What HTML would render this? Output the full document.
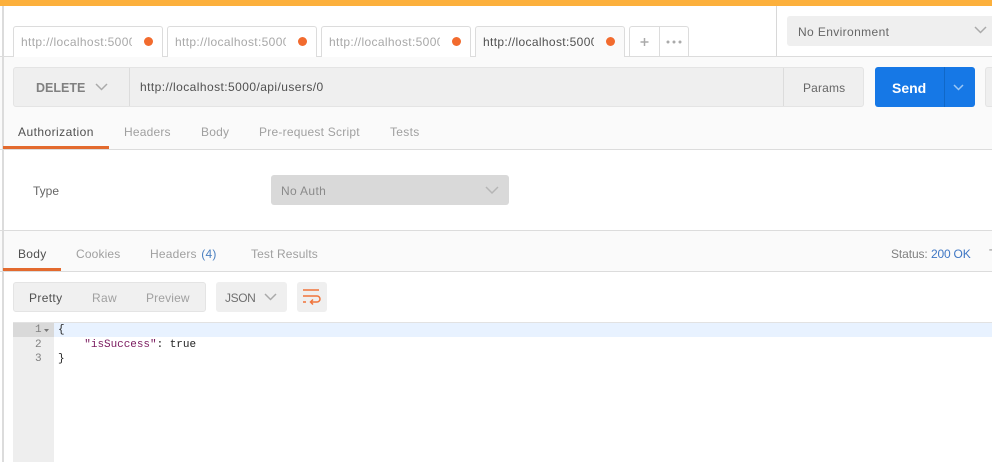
<!DOCTYPE html>
<html><head><meta charset="utf-8"><style>
html,body{margin:0;padding:0;background:#fff}
#p{position:relative;width:992px;height:462px;overflow:hidden;background:#fff;font-family:"Liberation Sans",sans-serif;font-size:12px;color:#808080}
#p div{position:absolute;box-sizing:border-box}
.t{white-space:nowrap;line-height:16px}
.m{white-space:pre;font:11px/16px 'Liberation Mono',monospace;letter-spacing:-.03px;color:#222}
.tab{top:26px;height:31px;width:150px;background:#fff;border:1px solid #dcdcdc;border-bottom:0;border-radius:3px 3px 0 0}
.tab .t{left:7px;top:7px;width:111px;overflow:hidden;color:#a8a8a8;letter-spacing:.35px}
.tab .d{left:130px;top:10px;width:9px;height:9px;border-radius:50%;background:#f26b2e}
svg{position:absolute;overflow:visible}
</style></head><body><div id="p">
<div style="left:0;top:57px;width:992px;height:93px;background:#fafafa"></div>
<div style="left:0;top:231px;width:992px;height:40px;background:#fafafa"></div>
<div style="left:0;top:0;width:992px;height:6px;background:#fcb03c"></div>
<div style="left:2px;top:6px;width:2px;height:456px;background:#dcdcdc"></div>
<div style="left:0;top:56px;width:992px;height:1px;background:#dcdcdc"></div>
<div style="left:776px;top:6px;width:1px;height:50px;background:#d8d8d8"></div>

<div class="tab" style="left:13px"><div class="t">http://localhost:5000</div><div class="d"></div></div>
<div class="tab" style="left:167px"><div class="t">http://localhost:5000</div><div class="d"></div></div>
<div class="tab" style="left:321px"><div class="t">http://localhost:5000</div><div class="d"></div></div>
<div class="tab" style="left:475px;background:#fafafa"><div class="t" style="color:#505050">http://localhost:5000</div><div class="d"></div></div>
<div style="left:629px;top:26px;width:60px;height:30px;background:#fff;border:1px solid #dcdcdc;border-bottom:0;border-radius:3px 3px 0 0"></div>
<div style="left:659px;top:27px;width:1px;height:29px;background:#dcdcdc"></div>
<svg style="left:0;top:0" width="992" height="462">
<path d="M640.500 42h8M644.500 38v8" stroke="#aaa" stroke-width="1.500" fill="none"/>
<circle cx="668" cy="42" r="1.500" fill="#aaa"/><circle cx="674" cy="42" r="1.500" fill="#aaa"/><circle cx="680" cy="42" r="1.500" fill="#aaa"/>
</svg>

<div style="left:787px;top:16px;width:205px;height:30px;background:#efefef;border-radius:3px 0 0 3px"></div>
<div class="t" style="left:798px;top:24px;color:#666;letter-spacing:.38px">No Environment</div>

<div style="left:13px;top:67px;width:851px;height:40px;background:#efefef;border:1px solid #e4e4e4;border-radius:3px"></div>
<div style="left:129px;top:68px;width:1px;height:38px;background:#dcdcdc"></div>
<div style="left:783px;top:68px;width:1px;height:38px;background:#dcdcdc"></div>
<div class="t" style="left:36px;top:80px;font-size:12.500px;font-weight:bold;color:#808080">DELETE</div>
<div class="t" style="left:140px;top:79px;color:#505050;letter-spacing:.43px">http://localhost:5000/api/users/0</div>
<div class="t" style="left:803px;top:80px;color:#666;letter-spacing:.15px">Params</div>

<div style="left:875px;top:67px;width:100px;height:40px;background:#1678e6;border-radius:3px"></div>
<div style="left:944px;top:67px;width:1px;height:40px;background:#1068c8"></div>
<div class="t" style="left:892px;top:80px;font-size:14px;font-weight:bold;color:#fff">Send</div>
<div style="left:985px;top:67px;width:7px;height:40px;background:#efefef;border:1px solid #e4e4e4;border-right:0;border-radius:3px 0 0 3px"></div>

<div class="t" style="left:18px;top:124px;color:#505050;letter-spacing:.45px">Authorization</div>
<div class="t" style="left:124px;top:124px;color:#a0a0a0;letter-spacing:.2px">Headers</div>
<div class="t" style="left:201px;top:124px;color:#a0a0a0;letter-spacing:.2px">Body</div>
<div class="t" style="left:259px;top:124px;color:#a0a0a0;letter-spacing:.23px">Pre-request Script</div>
<div class="t" style="left:390px;top:124px;color:#a0a0a0;letter-spacing:.3px">Tests</div>
<div style="left:0;top:149px;width:992px;height:1px;background:#dcdcdc"></div>
<div style="left:3px;top:146px;width:106px;height:3px;background:#e36a2e"></div>

<div class="t" style="left:33px;top:183px;color:#666">Type</div>
<div style="left:271px;top:175px;width:238px;height:30px;background:#d9d9d9;border-radius:3px"></div>
<div class="t" style="left:281px;top:183px;color:#8a8a8a;letter-spacing:.35px">No Auth</div>

<div style="left:0;top:230px;width:992px;height:1px;background:#dcdcdc"></div>
<div class="t" style="left:18px;top:246px;color:#505050;letter-spacing:.3px">Body</div>
<div class="t" style="left:76px;top:246px;color:#a0a0a0;letter-spacing:.15px">Cookies</div>
<div class="t" style="left:150px;top:246px;color:#a0a0a0;letter-spacing:.2px">Headers <span style="color:#4a7fc0;margin-left:1px">(4)</span></div>
<div class="t" style="left:251px;top:246px;color:#a0a0a0;letter-spacing:.13px">Test Results</div>
<div style="left:0;top:271px;width:992px;height:1px;background:#dcdcdc"></div>
<div style="left:3px;top:268px;width:58px;height:3px;background:#e36a2e"></div>
<div class="t" style="left:891px;top:246px;color:#808080;letter-spacing:-.1px">Status:</div>
<div class="t" style="left:931px;top:246px;color:#3f77c4;letter-spacing:-.2px">200 OK</div>
<div class="t" style="left:989px;top:246px;color:#808080">T</div>

<div style="left:13px;top:282px;width:193px;height:30px;background:#f0f0f0;border:1px solid #e4e4e4;border-radius:3px"></div>
<div class="t" style="left:29px;top:290px;color:#505050;letter-spacing:.35px">Pretty</div>
<div class="t" style="left:92px;top:290px;color:#a0a0a0;letter-spacing:.3px">Raw</div>
<div class="t" style="left:146px;top:290px;color:#a0a0a0;letter-spacing:.15px">Preview</div>
<div style="left:216px;top:282px;width:71px;height:30px;background:#efefef;border-radius:3px"></div>
<div class="t" style="left:225px;top:290px;color:#707070;letter-spacing:-.4px">JSON</div>
<div style="left:297px;top:282px;width:30px;height:30px;background:#efefef;border-radius:3px"></div>

<div style="left:13px;top:322px;width:979px;height:1px;background:#e2e2e2"></div>
<div style="left:13px;top:323px;width:41px;height:139px;background:#eee"></div>
<div style="left:54px;top:323px;width:938px;height:14px;background:#e8f2ff"></div>
<div style="left:13px;top:323px;width:41px;height:14px;background:#d9d9d9"></div>
<div class="m" style="left:35px;top:322px;color:#808080">1</div>
<div class="m" style="left:35px;top:337px;color:#808080">2</div>
<div class="m" style="left:35px;top:351px;color:#808080">3</div>
<div class="m" style="left:58px;top:322px">{</div>
<div class="m" style="left:58px;top:337px">    <span style="color:#7a1a5e">"isSuccess"</span>: true</div>
<div class="m" style="left:58px;top:351px">}</div>

<svg style="left:0;top:0" width="992" height="462" fill="none">
<path d="M96 84l5.500 5.500L107 84" stroke="#aaa" stroke-width="1.500"/>
<path d="M975 27l5.500 5.500L986 27" stroke="#aaa" stroke-width="1.500"/>
<path d="M954 85l4.500 4.500L963 85" stroke="#9cc8f5" stroke-width="1.500"/>
<path d="M486 187l6 6 6-6" stroke="#b5b5b5" stroke-width="1.500"/>
<path d="M265 294l5.500 5.500L276 294" stroke="#aaa" stroke-width="1.500"/>
<path d="M303 290h16M303 296h14a2.500 2.500 0 0 1 0 6h-6M303 302h3M313 299.500l-2.500 2.500 2.500 2.500" stroke="#f0743a" stroke-width="1.500"/>
<path d="M44 329h5l-2.500 3z" fill="#777"/>
</svg>
</div></body></html>
